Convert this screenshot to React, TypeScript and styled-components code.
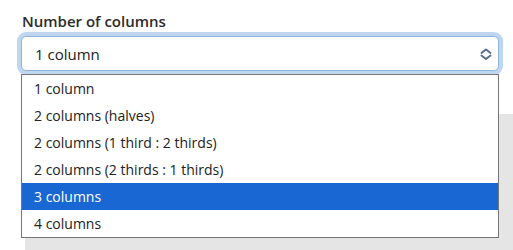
import React from 'react'
import styled, { createGlobalStyle } from 'styled-components'

const GlobalStyle = createGlobalStyle`
    html, body {
        margin: 0;
        padding: 0;
        background: #ffffff;
    }
    body {
        font-family: "Open Sans", "Noto Sans", sans-serif;
        color: #222222;
    }
`

const Page = styled.div`
    width: 513px;
    height: 250px;
    overflow: hidden;
    padding: 11px 14px 0 21px;
    box-sizing: border-box;
`

const Field = styled.div`
    display: flex;
    flex-direction: column;
    gap: 5px;
`

const Label = styled.label`
    font-size: 15px;
    font-weight: 600;
    line-height: 20px;
    color: #2b2b2b;
    padding-left: 1px;
`

const SelectWrap = styled.div`
    position: relative;
    z-index: 1;
`

const SelectBox = styled.div`
    height: 35px;
    box-sizing: border-box;
    border: 1px solid #8db4e0;
    border-radius: 5px;
    box-shadow: 0 0 0 4px #bfd7ee;
    display: flex;
    align-items: center;
    justify-content: space-between;
    padding: 0 4px 0 13px;
    font-size: 15px;
    color: #222;
    background: #fff;
`

const Chevrons = styled.svg`
    width: 16px;
    height: 16px;
    color: #5c6f8c;
`

const Listbox = styled.ul`
    position: absolute;
    top: calc(100% + 3px);
    left: 0;
    right: 0;
    margin: 0;
    padding: 0;
    list-style: none;
    background: #fff;
    border: 1px solid #767676;
`

const Option = styled.li<{ $selected?: boolean }>`
    height: 27px;
    line-height: 27px;
    padding-left: 12px;
    font-size: 14px;
    color: ${p => (p.$selected ? '#ffffff' : '#222222')};
    background: ${p => (p.$selected ? '#1967d2' : 'transparent')};
`

const GrayPanel = styled.div`
    margin-top: 43px;
    margin-left: 4px;
    margin-right: -20px;
    height: 200px;
    background: #e5e5e5;
`

const options = [
    '1 column',
    '2 columns (halves)',
    '2 columns (1 third : 2 thirds)',
    '2 columns (2 thirds : 1 thirds)',
    '3 columns',
    '4 columns',
]

export default function App() {
    return (
        <>
            <GlobalStyle />
            <Page>
                <Field>
                    <Label>Number of columns</Label>
                    <SelectWrap>
                        <SelectBox>
                            <span>1 column</span>
                            <Chevrons viewBox="0 0 16 16" fill="none" stroke="currentColor" strokeWidth="2" strokeLinecap="round" strokeLinejoin="round">
                                <path d="M3.5 7 L8 3.5 L12.5 7" />
                                <path d="M3.5 9.5 L8 13 L12.5 9.5" />
                            </Chevrons>
                        </SelectBox>
                        <Listbox>
                            {options.map(o => (
                                <Option key={o} $selected={o === '3 columns'}>{o}</Option>
                            ))}
                        </Listbox>
                    </SelectWrap>
                </Field>
                <GrayPanel />
            </Page>
        </>
    )
}
